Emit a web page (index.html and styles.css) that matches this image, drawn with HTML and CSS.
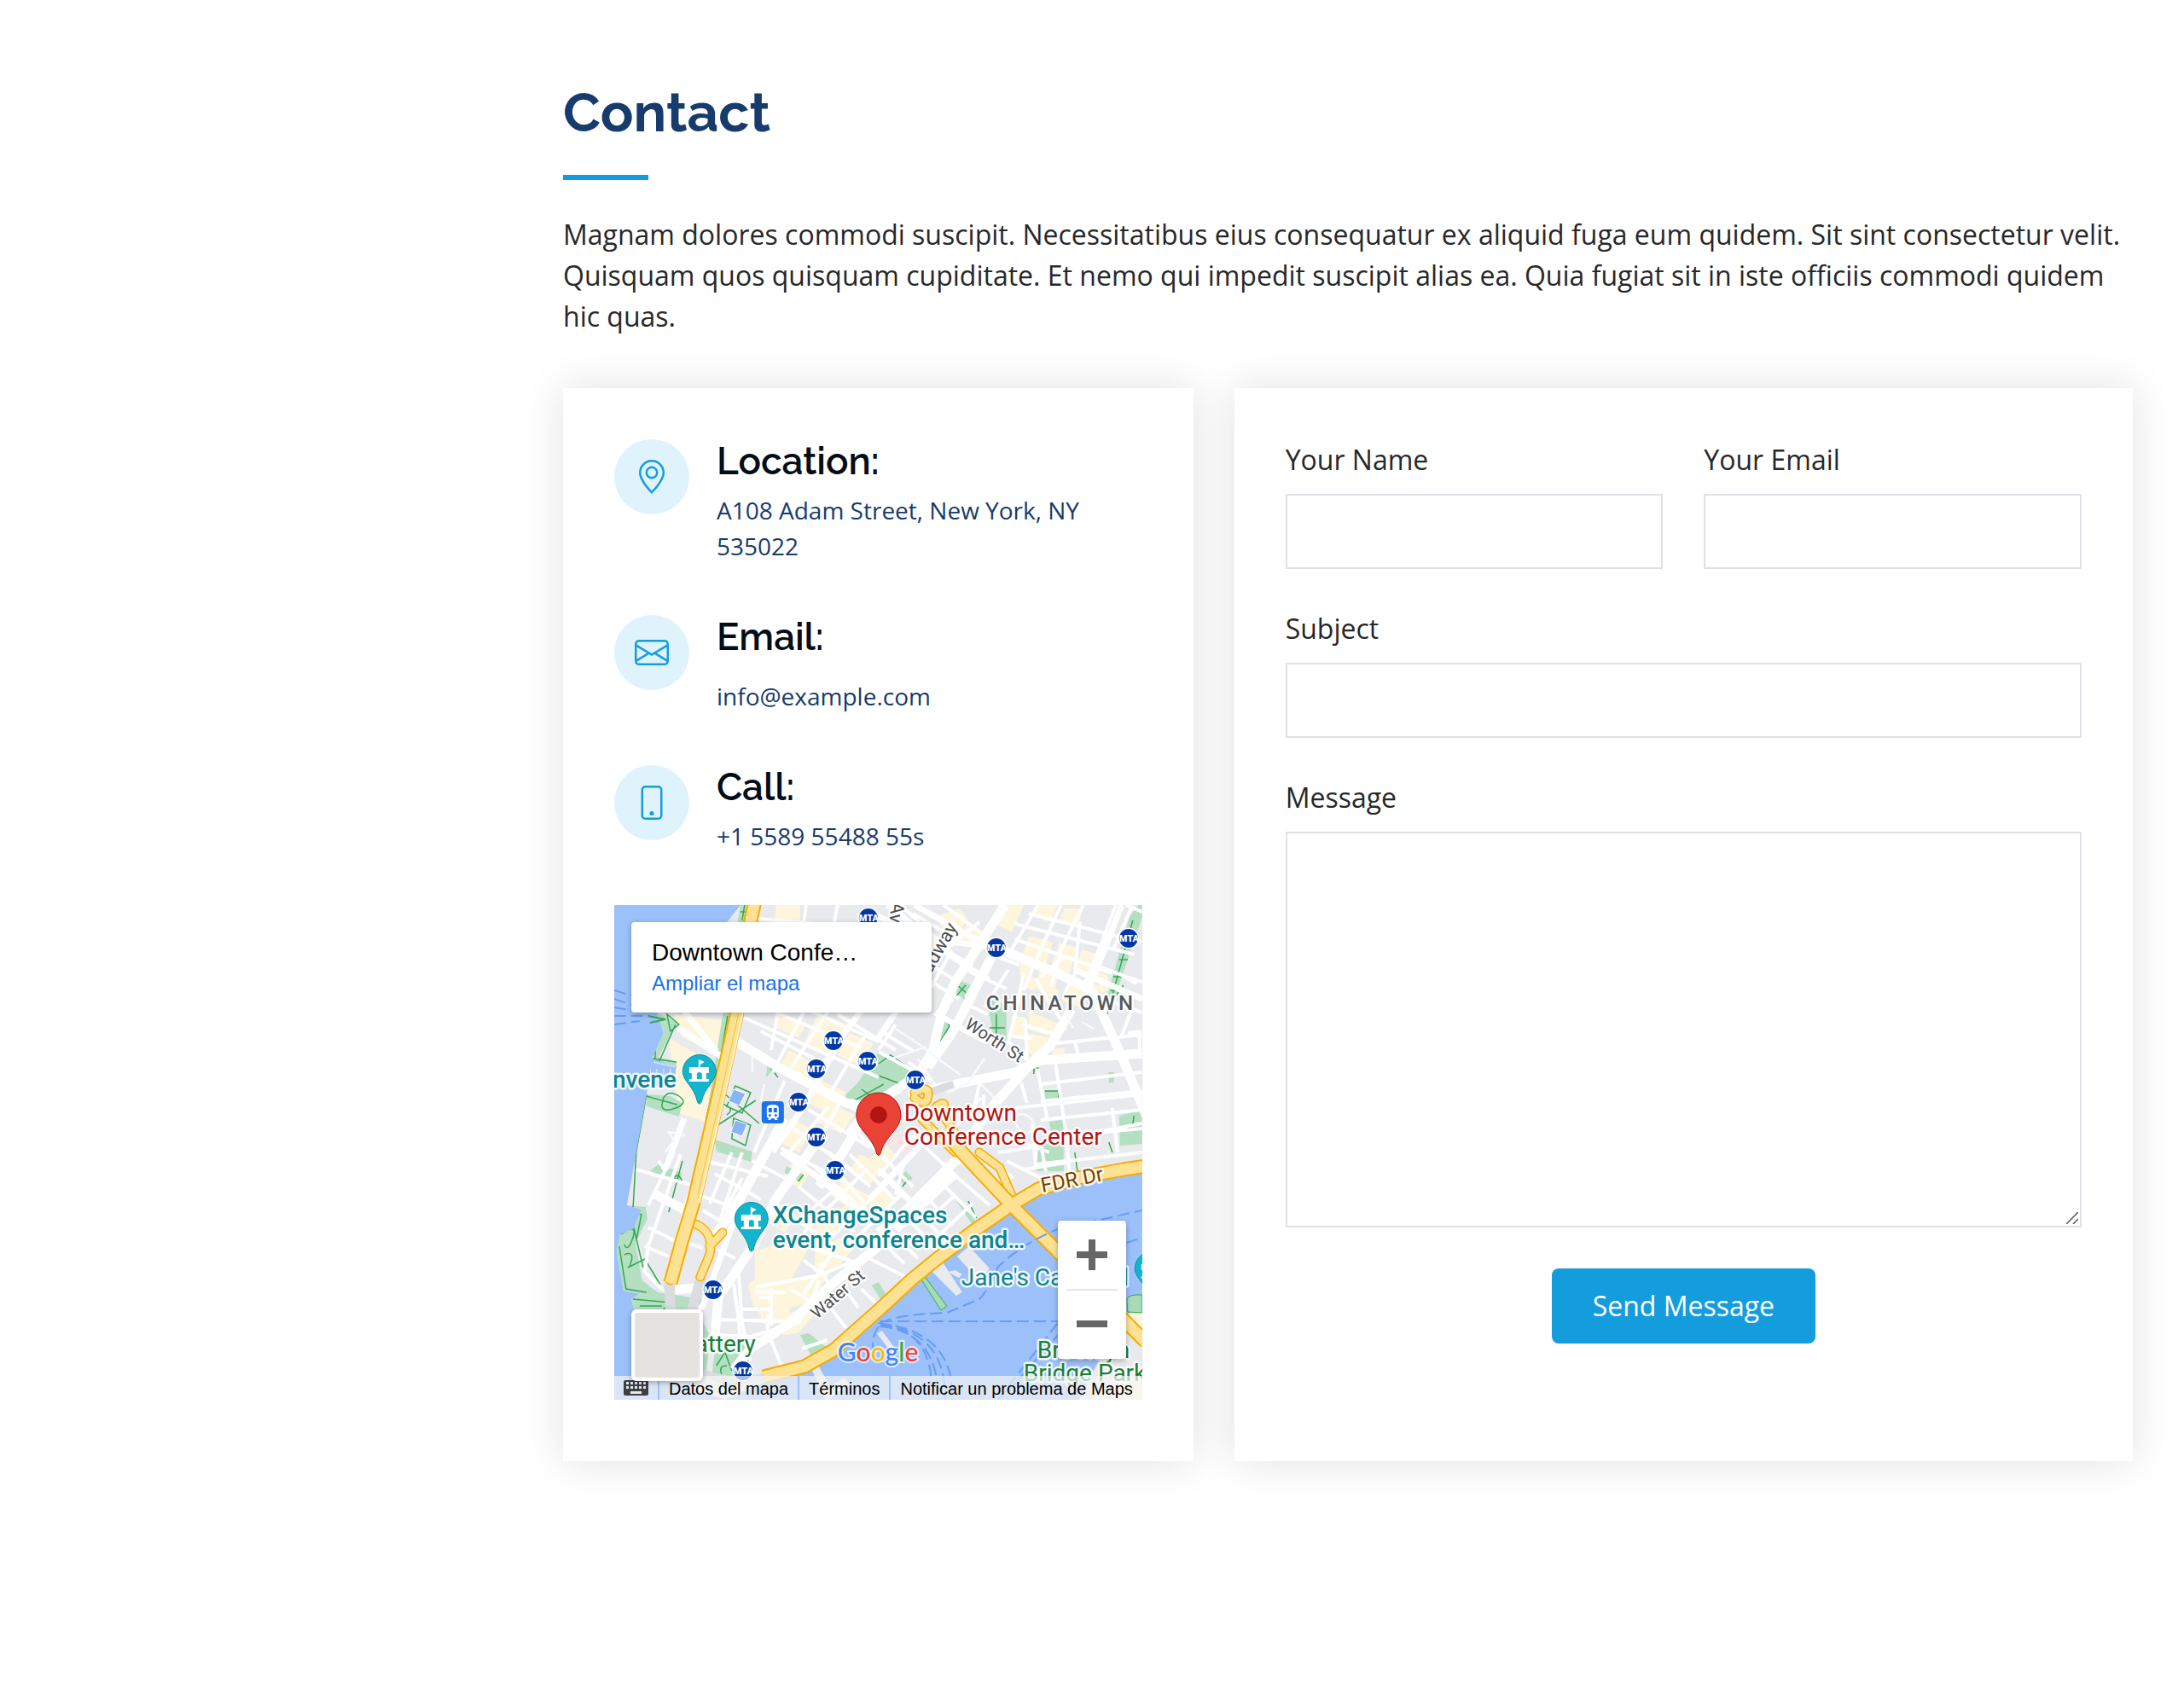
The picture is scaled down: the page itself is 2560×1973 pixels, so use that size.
FILE: index.html
```html
<!DOCTYPE html>
<html lang="en">
<head>
<meta charset="utf-8">
<meta name="viewport" content="width=device-width, initial-scale=1">
<title>Contact</title>
<link rel="stylesheet" href="styles.css">
</head>
<body>
<main class="main">
  <section class="contact">
    <header class="section-title">
      <h2>Contact</h2>
      <p>Magnam dolores commodi suscipit. Necessitatibus eius consequatur ex aliquid fuga eum quidem. Sit sint consectetur velit. Quisquam quos quisquam cupiditate. Et nemo qui impedit suscipit alias ea. Quia fugiat sit in iste officiis commodi quidem hic quas.</p>
    </header>
    <div class="row">
      <div class="card info">
        <div class="info-item">
          <span class="info-icon"><svg viewBox="0 0 16 16" aria-hidden="true"><path d="M12.166 8.94c-.524 1.062-1.234 2.12-1.96 3.07A31.493 31.493 0 0 1 8 14.58a31.481 31.481 0 0 1-2.206-2.57c-.726-.95-1.436-2.008-1.96-3.07C3.304 7.867 3 6.862 3 6a5 5 0 0 1 10 0c0 .862-.305 1.867-.834 2.94zM8 16s6-5.686 6-10A6 6 0 0 0 2 6c0 4.314 6 10 6 10z"/><path d="M8 8a2 2 0 1 1 0-4 2 2 0 0 1 0 4zm0 1a3 3 0 1 0 0-6 3 3 0 0 0 0 6z"/></svg></span>
          <div><h4>Location:</h4><p>A108 Adam Street, New York, NY 535022</p></div>
        </div>
        <div class="info-item">
          <span class="info-icon"><svg viewBox="0 0 16 16" aria-hidden="true"><path d="M0 4a2 2 0 0 1 2-2h12a2 2 0 0 1 2 2v8a2 2 0 0 1-2 2H2a2 2 0 0 1-2-2V4zm2-1a1 1 0 0 0-1 1v.217l7 4.2 7-4.2V4a1 1 0 0 0-1-1H2zm13 2.383-4.758 2.855L15 11.114v-5.73zm-.034 6.878L9.271 8.82 8 9.583 6.728 8.82l-5.694 3.44A1 1 0 0 0 2 13h12a1 1 0 0 0 .966-.739zM1 11.114l4.758-2.876L1 5.383v5.73z"/></svg></span>
          <div><h4>Email:</h4><p class="spaced">info@example.com</p></div>
        </div>
        <div class="info-item">
          <span class="info-icon"><svg viewBox="0 0 16 16" aria-hidden="true"><path d="M11 1a1 1 0 0 1 1 1v12a1 1 0 0 1-1 1H5a1 1 0 0 1-1-1V2a1 1 0 0 1 1-1h6zM5 0a2 2 0 0 0-2 2v12a2 2 0 0 0 2 2h6a2 2 0 0 0 2-2V2a2 2 0 0 0-2-2H5z"/><path d="M8 14a1 1 0 1 0 0-2 1 1 0 0 0 0 2z"/></svg></span>
          <div><h4>Call:</h4><p>+1 5589 55488 55s</p></div>
        </div>
        <div class="map">
          <svg class="map-canvas" viewBox="0 0 619 580" preserveAspectRatio="xMidYMid slice" role="img" aria-label="Map of Lower Manhattan">
            <defs>
              <g id="mta"><circle r="12.500" fill="#fff"/><circle r="11" fill="#0039a6"/><text class="mta" x="-11" y="4">MTA</text></g>
              <g id="venue">
                <path d="M-19.500 0a19.500 19.500 0 1 1 39 0c0 12-13 17-17 35-1 4-4 4-5 0-4-18-17-23-17-35z" fill="#12b5cb" stroke="#0b8fa0"/>
                <path d="M-1-14l7 3-5 3v3h10v7h-3v7h3v3h-23v-3h3v-7h-3v-7h11z" fill="#fff"/><path d="M-3 9v-5a3 3 0 0 1 6 0v5z" fill="#12b5cb"/>
              </g>
              <clipPath id="land">
                <path d="M148 0L50 126L58 150L45 179L38 222L26 289L15 352L32 357L23 379L7 386L3 406L11 452L30 456L20 462L25 480L60 556L130 580L175 560L223 547L257 528L310 482L350 448L377 424L420 390L465 360L497 340L543 326L619 312V0z"/>
              </clipPath>
            </defs>
            <rect width="619" height="580" fill="#9cc0f9"/>
            <!-- Manhattan -->
            <path fill="#e8eaed" d="M148 0L50 126L58 150L45 179L38 222L26 289L15 352L32 357L23 379L7 386L3 406L11 452L30 456L20 462L25 480L60 556L130 580L175 560L223 547L257 528L310 482L350 448L377 424L420 390L465 360L497 340L543 326L619 312V0z"/>
            <!-- Brooklyn and piers -->
            <path fill="#e8eaed" d="M545 580L560 549L600 479L619 474V580z"/>
            <path fill="#fef6dc" d="M603 480L619 478V512L600 495zM560 580l40-24 19-6v30z"/>
            <g fill="#e8eaed"><path d="M371 428l13-11 24 37-7 4zM402 412l14-12 24 26-12 14zM391 430l9-2 8 5-4 4zM230 541l8-3 20 34-5 8h-6z"/><path d="M308 502l6-3 16 22-4 5zM240 572l30-18 6 8-24 16z"/></g>
            <path fill="#a8dab5" stroke="#34a853" d="M359 437l4-3 27 36-7 5zM601 462q2-6 18-5v21l-17-1z"/>
            <g clip-path="url(#land)">
              <!-- commercial blocks -->
              <g fill="#fef6dc">
                <path d="M190 0h28v24h-30zM70 128l68 8-7 46-52-28zM64 156l56 32-14 66-30-10-7-50zM190 128l36 10-10 18-30-14zM238 130l34 14-18 36-32-18zM276 150l28 12-16 26-26-12zM205 170l36 18-12 20-36-18zM240 205l32 14-20 26-26-14zM207 250l24 12-14 28-24-12zM250 230l32 16-16 22-28-14z"/>
                <path d="M382 12l22-8 10 12-12 22-20-14zM414 22l22 14-8 16-24-14zM450 0h30l-14 32-20-10zM496 0h24l-8 20-22-8zM528 4h22l-6 20-22-6zM486 36l28 8-8 26-28-10zM522 44l20 6-8 30-22-8zM548 52l20 6-10 28-18-6zM480 56l14 6-10 26-10-8zM500 72l22 8-8 26-20-8zM536 84l20 6-10 30-20-8zM564 76l14 6 4 16-12 6zM556 88l14 8-8 30-10-22zM484 82l16 6-8 12-14-4zM506 92l16 8-4 12-18-10zM466 130l18 2-4 24-14-4zM486 124l46 20-14 12-32-10zM484 150l30 6-14 26-18-12zM514 168h14v8h-14z"/>
                <path d="M165 406l40-14 24 8-20 36-4 46-22 12-20-24-6-24 8-8zM232 380l20-16 14 14-14 18zM262 360l20-18 16 14-16 18zM268 324l34 18-20 18-28-20zM288 292l28 14-16 22-24-16zM210 300l22 10-14 22-20-12zM310 330l20 16-18 16-18-14zM236 404l30-14 20 8-26 28-26 4zM202 440l52-10-24 36-32 8zM172 470l24 2-10 20-14-2zM200 480l46-14-30 36-18 2zM300 296l20-14 12 14-18 14zM190 348l24 16-14 20-20-12z"/>
              </g>
              <path fill="#fce4e4" d="M322 276l20-12 16 18-10 14z"/>
              <!-- parks -->
              <g fill="#b4dfc1">
                <path d="M148 0h12l-28 176-26 113-42 164-6-2 30-112 20-90zM50 126l24 12-22 40 22 6-2 6-26-8zM38 222l28 2 14 8-4 16-38-12zM180 184l12 4-14 14zM118 275l44 14-2 12-40-12zM52 304l28 10-4 12-34-14zM15 352l22 2 2 14-14 28 8 44 18 14 52 8-4 16 14 28-6 50-30-4-60-80-10-8-8-72z"/>
                <path d="M310 172l44 24-14 22-40 8-30 8 2-12 14-14zM399 86l20 8-8 18-12-12zM387 128l10 6-6 22-14 14zM440 110l20 8v48l-16-16-4-22zM403 140l6 2-2 8zM604 14l15-20v20l-38 112-4-16zM505 218h16v12h-16zM495 276l32-4v40h-32zM510 254l20-3v22h-16zM592 247l27-7v40l-26 2zM492 186l6 6-6 4zM580 196h6v12h-6zM202 306l20 10-6 8-16-10zM330 320l12-8 8 8-8 8zM355 355l12-4-6 10zM218 504l10-2 28 22-20 14zM132 508l20 8 12 36-24 14-26-10 4-34zM302 446l8-4 12 20-6 6zM400 345l4-2 20 28-4 4z"/>
              </g>
              <g fill="none" stroke="#34a853" stroke-width="1.500">
                <path d="M153 0l-3 18M148 8h8M133 130l-10 60-15 60M72 140l-22 50 22 0-4 12-24-8M45 180l28 4M38 224l36 10M50 130l-2 50M62 128l14 12-10 8zM58 226q6-10 18-2t-4 14-16-4zM142 212l18 8-10 24-18-8zM140 250l20 8-6 24-16-8zM128 220l42 36M166 229l-46 30M124 232q20 6 8 14M38 222l-12 67-4 70 10 4-6 30M20 365l14 60M8 386q20-14 14 4t-10 8M12 410q14-6 6 14M6 400l8 50 24 4M16 425l20-10 18 30M22 462l44 4-20 20M30 470l26 0M80 300l-16 60M54 306l8 4M70 320q4-6 8 0t-8 0M140 60M180 186l12 16M280 230l36-20M290 216l20 14"/>
                <path d="M310 186l14-10 26 18M310 200l32 12 10-14M400 92l14 12M412 94l-12 14M388 130l5 12-14 24M390 150l6-6M448 128v38M440 144h18M608 18l-30 110M600 38h14M592 64h10M585 84h10M590 100h-8M585 110l12-16M505 218h16v10M498 192l-6-4 0 10M592 263q18 2 17-16M540 290l3 22M580 278l4 12M222 316l-6 8M334 314l10 8-6 8M415 347l10 20M120 540l10-16 8 22M126 550q-4-10 6-10M64 440l40-160"/>
              </g>
              <!-- minor streets -->
              <g fill="none" stroke="#fff" stroke-width="4">
                <path d="M168 16L240 22L310 38M172 32L300 60M225 0L218 60M262 0L250 60M152 132L310 202M190 126L290 168M230 124L310 160M262 128L330 170M172 148L235 180M192 126L184 170M222 126L186 196M250 126L208 190M276 140L236 200M296 150L250 226M200 206L164 290M252 236L206 289M232 210L320 262M228 240L300 284M210 262L278 310M196 285L270 325M268 226L220 310M300 230L272 268M276 258L320 300M252 290L300 330"/>
                <path d="M350 10L412 46M386 0L440 40M336 0L400 60M428 20L380 60M392 60L372 96M416 60L394 96M376 48L420 78M374 72L400 88M372 90L404 110M396 110L380 130M310 172L372 206M316 150L352 172M330 140L310 170M345 184L360 196M404 66L440 86M438 64L412 108M462 76L434 120M416 78L460 98M412 116L438 128"/>
                <path d="M497 0L466 52M524 0L500 52L480 100M550 0L524 52L512 96M528 60L500 84M470 22L610 58M470 40L584 80M452 62L475 70M486 10L618 44M546 20L540 80L526 108M588 0L556 86M606 4L586 50M564 70L600 84L619 90M480 80L470 130L462 160L484 182M494 86L512 118L530 142M478 140L518 152M466 154L490 156M482 134L484 180M600 0L619 8M592 80L612 92M580 112L619 126M606 124L594 156"/>
                <path d="M516 176L530 270L534 320M496 192L508 252M584 238L590 290M500 210L619 196M500 230L619 218M500 252L619 240M470 238L619 222M530 270L619 262M518 162L619 152M602 150L616 148V170M540 160L544 176M494 300L495 280L619 256M490 256L494 304L530 300M477 208L484 232M430 200L420 250M433 222V250M430 226L400 260M484 280l26 10M532 300L619 290"/>
                <path d="M108 300L180 318M118 315L172 345M100 340L160 362M52 300L60 312M70 290L40 352M78 292L40 400L36 430L58 452M26 310L90 328M46 338L96 366M90 330L60 440M40 378L72 394M36 400L64 412M138 290L112 350M150 320L130 358M104 358L124 370L150 290M162 300L200 320M118 400L100 440M84 396L104 402M120 404L142 414M145 418L150 490L160 534"/>
                <path d="M166 448L240 434L300 410M166 454H200M122 486L200 488L246 468M118 504L160 506L220 488M180 480V500L196 540M140 444L146 486L148 510M206 450L240 470M222 416L240 430M240 420L252 446M260 402L222 456M184 450V492M240 440L232 464L206 492M150 474H186M170 460H186M232 402L286 420M200 360L260 400M216 330L282 384M236 308L300 364M262 330L212 374M294 312L222 384M320 326L252 392M340 336L270 404M250 300L296 352M276 292L330 346M310 290L350 330M350 270L310 318M340 300L330 340M290 410L350 440M268 446L286 472M290 450L306 466M252 470L272 496M310 390L340 420M322 380L356 414M340 364L372 396M350 350L384 390M364 340L396 374M380 322L424 366M394 312L440 352M400 340L364 372M420 350L380 388M386 312L350 350M300 400L330 372M390 400L408 422L418 424M220 520L250 510"/>
                <path d="M420 300L386 304L350 270M460 300L500 320M450 290L490 284M500 278L506 312M480 310L530 302M468 320L440 300"/>
              </g>
              <!-- avenues -->
              <g fill="none" stroke="#fff" stroke-linejoin="round">
                <g stroke-width="7">
                  <path d="M320 0L372 40L448 50M352 0L420 38L448 50M340 40L300 110L270 150L220 240L186 289M300 8L350 34L420 72M310 156L400 20M376 126L410 146L437 160M82 124L120 172M75 144L126 178M82 250L60 310M196 289L240 320L300 370M310 310L350 350L380 372M540 76L619 110M595 0L560 90M150 344L104 470L90 480M370 270L300 344"/>
                </g>
                <g stroke-width="11">
                  <path d="M142 159L192 190L272 232L320 240M458 0L400 90L384 126L374 170L356 200L300 236L268 290L240 330"/>
                  <path d="M448 50L520 80L560 100M448 50L412 120L396 150L368 190M560 100L596 180L625 250M345 222L400 210L470 196L500 182L619 174M536 122L512 164L490 184L440 240L400 300L340 360L310 384"/>
                  <path d="M200 250L150 340L116 392M236 280L190 344L164 398L122 460L117 520M64 452L122 446M22 300M310 400L256 444L206 490L160 520L140 545M580 34L552 100M330 380L400 314M46 338L88 360"/>
                </g>
              </g>
              <g fill="none" stroke="#f8f9fa" stroke-width="2.500"><path d="M330 145l30 20 26 20 20 14M326 180l40-14M390 220l24-10 20-30M356 180l20 30M360 280l10-8 20 10 20-14M440 270l20 10 24-10M470 256l10 14-10 12M176 210l-4 20M60 290l10-14-6-10 20 4M468 250q10-10 20 0t-6 20-20-2M530 130l8 14M562 145l-14-8 M162 176v20M430 210l20 20"/></g>
              <path d="M398 210l-24 8-24 14" fill="none" stroke="#dadce0" stroke-width="9"/>
            </g>
            <!-- tunnels -->
            <g fill="none" stroke="#dadce0" stroke-width="12"><path d="M65 442L66 480M102 436L90 480"/><path d="M104 548Q140 562 176 553" stroke-width="8"/></g>
            <!-- ramps -->
            <g fill="none" stroke-linecap="round" stroke-linejoin="round">
              <path d="M90 372Q118 380 112 410L101 436M127 384L112 400M80 395L66 440M352 220Q370 210 368 224T352 226M378 236Q392 226 384 244L408 280M360 250L400 290M428 290L452 308L466 340" stroke="#f9ab00" stroke-width="11"/>
              <path d="M90 372Q118 380 112 410L101 436M127 384L112 400M80 395L66 440M352 220Q370 210 368 224T352 226M378 236Q392 226 384 244L408 280M360 250L400 290M428 290L452 308L466 340" stroke="#fde293" stroke-width="8"/>
            </g>
            <!-- highways -->
            <g fill="none" stroke-linejoin="round">
              <g stroke="#f9ab00" stroke-width="17">
                <path d="M165 -4L160 19L144 126L133 176L118 242L107 289L93 349L80 392L66 443"/>
                <path d="M175 553L223 541L257 522L310 475L350 438L377 416L420 383L465 352L497 333L543 320L597 310L623 306M386 264L407 289L465 351L520 406L600 489L623 512"/>
              </g>
              <g stroke="#fde293" stroke-width="13">
                <path d="M165 -4L160 19L144 126L133 176L118 242L107 289L93 349L80 392L66 443"/>
                <path d="M175 553L223 541L257 522L310 475L350 438L377 416L420 383L465 352L497 333L543 320L597 310L623 306M386 264L407 289L465 351L520 406L600 489L623 512"/>
              </g>
              <path d="M151 126L140 176L125 242L114 289L100 349" stroke="#fff3cc" stroke-width="2"/>
              <path d="M146 126L130 200L110 289L98 340" stroke="#f9c23c"/>
            </g>
            <!-- ferry routes -->
            <g fill="none" stroke="#669df6" stroke-width="2" stroke-dasharray="14 6">
              <path d="M312 490Q330 480 390 478L428 462Q440 450 450 424Q480 396 520 380L619 358M312 488H520M600 396l19-6M310 490Q400 500 396 580M312 492Q390 500 388 580M312 494Q380 500 380 580M312 490Q370 500 372 560M450 580L520 490M462 570L524 500M310 494q-14 20 0 40M0 100l20 6M0 110l40 14M0 120l38 6M0 130h34M0 140l30-4"/>
            </g>
            <path d="M40 130l20 4-18 4" fill="none" stroke="#34a853" stroke-width="2"/>
            <path d="M44 180l28 10v22H42z" fill="#9cc0f9"/><path d="M46 184l26 6M50 192v8M58 192v8M66 192v8" stroke="#c6dafc" stroke-width="2"/>
            <g fill="#8ab4f8" stroke="#fff"><path d="M140 216l14 5-7 14-13-5zM142 252l14 5-6 14-13-5z"/></g>
            <!-- place labels -->
            <g class="label">
              <text class="district" x="436" y="123">CHINATOWN</text>
              <g class="street">
                <text transform="translate(410 143) rotate(33)">Worth St</text>
                <text class="avenue" transform="translate(403 26) rotate(-60)" text-anchor="end">Broadway</text>
                <text class="avenue" transform="translate(325 -4) rotate(95)">Ave</text>
                <text transform="translate(238 486) rotate(-41)">Water St</text>
              </g>
              <text class="highway" transform="translate(502 337) rotate(-11)">FDR Dr</text>
              <text class="green" x="166" y="524" text-anchor="end">The Battery</text>
              <text class="green" x="496" y="531">Brooklyn</text>
              <text class="green" x="480" y="558">Bridge Park</text>
              <text class="teal" x="407" y="446">Jane's Carousel</text>
              <g class="teal medium">
                <text x="73" y="214" text-anchor="end">Convene</text>
                <text x="186" y="373">XChangeSpaces</text>
                <text x="186" y="402">event, conference and…</text>
              </g>
              <text class="red" x="340" y="253">Downtown</text>
              <text class="red" x="340" y="281">Conference Center</text>
            </g>
            <use href="#mta" x="298" y="15"/><use href="#mta" x="257" y="159"/><use href="#mta" x="297" y="183"/><use href="#mta" x="237" y="192"/><use href="#mta" x="216" y="231"/><use href="#mta" x="237" y="272"/><use href="#mta" x="448" y="50"/><use href="#mta" x="603" y="39"/><use href="#mta" x="353" y="205"/><use href="#mta" x="259" y="311"/><use href="#mta" x="116" y="451"/><use href="#mta" x="151" y="546"/>
            <use href="#venue" x="100" y="195"/><use href="#venue" x="161" y="368"/><use href="#venue" x="630" y="426"/>
            <g transform="translate(173 230)"><rect width="26" height="26" rx="4" fill="#1a73e8"/><path d="M6 8q0-4 7-4t7 4v9q0 3-3 3l2 2h-3l-2-2h-2l-2 2H7l2-2q-3 0-3-3z" fill="#fff"/><path d="M8 8h4v5H8zM14 8h4v5h-4z" fill="#1a73e8"/><circle cx="9.500" cy="16.500" r="1.500" fill="#1a73e8"/><circle cx="16.500" cy="16.500" r="1.500" fill="#1a73e8"/></g>
            <path d="M284 246a26 26 0 1 1 52 0c0 18-19 24-24 46q-2 3-4 0c-5-22-24-28-24-46z" fill="#ea4335" stroke="#b31412"/><circle cx="310" cy="246" r="10" fill="#b31412"/>
            <text class="google" x="262" y="535"><tspan fill="#4285f4">G</tspan><tspan fill="#ea4335">o</tspan><tspan fill="#fbbc04">o</tspan><tspan fill="#4285f4">g</tspan><tspan fill="#34a853">l</tspan><tspan fill="#ea4335">e</tspan></text>
          </svg>
          <div class="place-card">
            <div class="place-name">Downtown Confe…</div>
            <a href="#map">Ampliar el mapa</a>
          </div>
          <div class="zoom">
            <button type="button" aria-label="Zoom in"><svg viewBox="0 0 36 36"><path d="M14 0h8v14h14v8H22v14h-8V22H0v-8h14z"/></svg></button>
            <button type="button" aria-label="Zoom out"><svg viewBox="0 0 36 36"><path d="M0 14h36v8H0z"/></svg></button>
          </div>
          <div class="map-legal">
            <button type="button" aria-label="Keyboard shortcuts"><svg viewBox="0 0 29 18"><rect width="29" height="18" rx="2" fill="#3c4043"/><path d="M3 2h3v3H3zM8 2h3v3H8zM13 2h3v3h-3zM18 2h3v3h-3zM23 2h3v3h-3zM3 7h3v3H3zM8 7h3v3H8zM13 7h3v3h-3zM18 7h3v3h-3zM23 7h3v3h-3zM8 13h13v3H8z" fill="#e8eaed"/></svg></button>
            <a href="#data">Datos del mapa</a>
            <a href="#terms">Términos</a>
            <a href="#report">Notificar un problema de Maps</a>
          </div>
          <button class="map-type" type="button" aria-label="Satellite view"></button>
        </div>
      </div>
      <form class="card form">
        <div class="pair">
          <div class="field"><label for="name">Your Name</label><input id="name" type="text"></div>
          <div class="field"><label for="email">Your Email</label><input id="email" type="email"></div>
        </div>
        <div class="field"><label for="subject">Subject</label><input id="subject" type="text"></div>
        <div class="field"><label for="message">Message</label>
          <div class="area"><textarea id="message"></textarea><svg class="grip" viewBox="0 0 14 14" aria-hidden="true"><path d="M0 14L14 0M8 14l6-6" fill="none" stroke="#555" stroke-width="1.500"/></svg></div>
        </div>
        <button class="send" type="submit">Send Message</button>
      </form>
    </div>
  </section>
</main>
</body>
</html>
```
FILE: styles.css
```css
* {
  box-sizing: border-box;
}

body {
  margin: 0;
  background: #fff;
  color: #272829;
  font: 32px/48px "Open Sans", sans-serif;
}

h2, h4, p {
  margin: 0;
}

button, input, textarea {
  font: inherit;
}

.main {
  margin-left: 600px;
}

.contact {
  padding: 92px 60px 120px;
}

.section-title {
  padding-bottom: 60px;
}

.section-title h2 {
  margin-bottom: 40px;
  color: #173b6c;
  font: 700 64px/79px Raleway, Lato, sans-serif;
}

.section-title h2::after {
  content: "";
  display: block;
  width: 100px;
  height: 6px;
  margin-top: 34px;
  background: #149ddd;
}

.row {
  display: grid;
  grid-template-columns: repeat(12, 1fr);
  gap: 48px;
}

.card {
  padding: 60px;
  background: #fff;
  box-shadow: 0 0 48px rgba(0, 0, 0, 0.12);
}

.info {
  grid-column: span 5;
}

.form {
  grid-column: span 7;
  display: flex;
  flex-direction: column;
  gap: 46px;
}

.info-item {
  display: flex;
  gap: 32px;
  margin-bottom: 60px;
}

.info-icon {
  flex: none;
  display: flex;
  align-items: center;
  justify-content: center;
  width: 88px;
  height: 88px;
  border-radius: 50%;
  background: #dff3fc;
}

.info-icon svg {
  width: 40px;
  height: 40px;
  fill: #149ddd;
}

.info h4 {
  margin-bottom: 10px;
  color: #050d18;
  font: 600 44px/52px Raleway, Lato, sans-serif;
}

.info p {
  color: #173b6c;
  font-size: 28px;
  line-height: 42px;
}

.info p.spaced {
  padding-top: 12px;
}

/* map */
.map {
  position: relative;
  height: 580px;
  margin-bottom: 12px;
  overflow: hidden;
  font-family: "Liberation Sans", Arial, sans-serif;
}

.map-canvas {
  display: block;
  width: 100%;
  height: 100%;
  font-family: Roboto, sans-serif;
}

.label text {
  font-size: 28px;
  stroke: #fff;
  stroke-opacity: 0.85;
  stroke-width: 5px;
  stroke-linejoin: round;
  paint-order: stroke;
}

.label .district {
  font-size: 24px;
  font-weight: 500;
  letter-spacing: 4px;
  fill: #55585d;
}

.label .street text {
  font-size: 20px;
  fill: #4a4d51;
}

.label .street .avenue {
  font-size: 22px;
}

.label .highway {
  font-size: 24px;
  fill: #7a3e00;
}

.green {
  fill: #188038;
}

.teal {
  fill: #0c8590;
}

.medium {
  font-weight: 500;
}

.red {
  fill: #b31412;
}

.mta {
  fill: #fff;
  font-size: 11px;
  font-weight: 900;
}

.google {
  font: 500 30px Lato, sans-serif;
  stroke: #fff;
  stroke-opacity: 0.7;
  stroke-width: 4px;
  paint-order: stroke;
}

.place-card {
  position: absolute;
  top: 20px;
  left: 20px;
  width: 352px;
  height: 106px;
  padding: 18px 24px;
  border-radius: 4px;
  background: #fff;
  box-shadow: 0 2px 6px rgba(0, 0, 0, 0.3);
}

.place-name {
  color: #000;
  font-size: 28px;
  line-height: 36px;
}

.place-card a {
  display: block;
  color: #1a73e8;
  font-size: 24px;
  line-height: 36px;
  text-decoration: none;
}

.zoom {
  position: absolute;
  right: 19px;
  bottom: 48px;
  width: 80px;
  border-radius: 4px;
  background: #fff;
  box-shadow: 0 2px 6px rgba(0, 0, 0, 0.3);
}

.zoom button {
  display: flex;
  align-items: center;
  justify-content: center;
  width: 100%;
  height: 80px;
  padding: 0;
  border: 0;
  background: none;
}

.zoom button + button::before {
  content: "";
  position: absolute;
  top: 80px;
  left: 10px;
  right: 10px;
  height: 2px;
  background: #e6e6e6;
}

.zoom button + button {
  height: 82px;
}

.zoom svg {
  width: 36px;
  height: 36px;
  fill: #666;
}

.map-type {
  position: absolute;
  left: 20px;
  bottom: 22px;
  width: 84px;
  height: 84px;
  padding: 0;
  border: 4px solid #fff;
  border-radius: 6px;
  background: #e5e3df;
  box-shadow: 0 2px 6px rgba(0, 0, 0, 0.3);
}

.map-legal {
  position: absolute;
  left: 0;
  right: 0;
  bottom: 0;
  display: flex;
  gap: 2px;
  height: 28px;
  font-size: 20px;
  line-height: 30px;
  white-space: nowrap;
}

.map-legal a,
.map-legal button {
  padding: 0 11px;
  border: 0;
  background: rgba(245, 245, 245, 0.7);
  color: #000;
  text-decoration: none;
}

.map-legal a:last-child {
  flex: 1;
}

.map-legal button {
  display: flex;
  align-items: center;
}

.map-legal svg {
  width: 29px;
  height: 18px;
}

/* form */
.pair {
  display: grid;
  grid-template-columns: 1fr 1fr;
  gap: 48px;
}

.field {
  display: flex;
  flex-direction: column;
  gap: 16px;
}

.field input,
.field textarea {
  display: block;
  width: 100%;
  height: 88px;
  padding: 12px 24px;
  border: 2px solid #dee2e6;
  border-radius: 0;
  background: #fff;
  color: #212529;
}

.field textarea {
  height: 464px;
  resize: none;
}

.area {
  position: relative;
}

.grip {
  position: absolute;
  right: 4px;
  bottom: 4px;
  width: 14px;
  height: 14px;
}

.send {
  align-self: center;
  height: 88px;
  margin-top: 2px;
  padding: 0 48px;
  border: 0;
  border-radius: 8px;
  background: #149ddd;
  color: #fff;
}
```
